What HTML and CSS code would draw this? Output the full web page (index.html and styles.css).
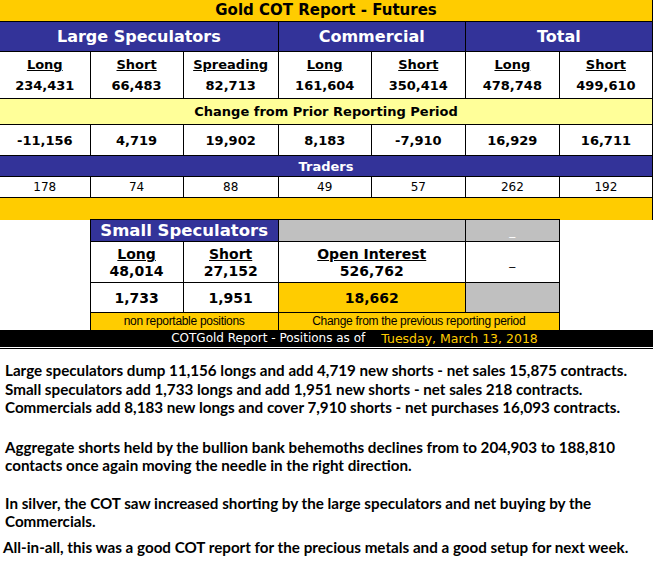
FILE: index.html
```html
<!DOCTYPE html>
<html>
<head>
<meta charset="utf-8">
<link rel="stylesheet" href="styles.css">
</head>
<body>
<div class="report">
<table class="cot">
  <colgroup>
    <col class="c90"><col class="c93"><col class="c95"><col class="c93"><col class="c94"><col class="c94"><col class="c93">
  </colgroup>
  <tr class="r-title"><td colspan="7" class="title first">Gold COT Report - Futures</td></tr>
  <tr class="r-group">
    <td colspan="3" class="group first">Large Speculators</td>
    <td colspan="2" class="group">Commercial</td>
    <td colspan="2" class="group">Total</td>
  </tr>
  <tr class="r-pos">
    <td class="pos first"><u>Long</u><br>234,431</td>
    <td class="pos"><u>Short</u><br>66,483</td>
    <td class="pos"><u>Spreading</u><br>82,713</td>
    <td class="pos"><u>Long</u><br>161,604</td>
    <td class="pos"><u>Short</u><br>350,414</td>
    <td class="pos"><u>Long</u><br>478,748</td>
    <td class="pos"><u>Short</u><br>499,610</td>
  </tr>
  <tr class="r-change"><td colspan="7" class="change first">Change from Prior Reporting Period</td></tr>
  <tr class="r-vals">
    <td class="val first">-11,156</td>
    <td class="val">4,719</td>
    <td class="val">19,902</td>
    <td class="val">8,183</td>
    <td class="val">-7,910</td>
    <td class="val">16,929</td>
    <td class="val">16,711</td>
  </tr>
  <tr class="r-traders"><td colspan="7" class="traders first">Traders</td></tr>
  <tr class="r-tnum">
    <td class="tnum first">178</td>
    <td class="tnum">74</td>
    <td class="tnum">88</td>
    <td class="tnum">49</td>
    <td class="tnum">57</td>
    <td class="tnum">262</td>
    <td class="tnum">192</td>
  </tr>
  <tr class="r-band"><td colspan="7" class="band first"></td></tr>
  <tr class="r-sshead">
    <td class="blank"></td>
    <td colspan="2" class="sshead">Small Speculators</td>
    <td colspan="2" class="grey"></td>
    <td class="grey dash-w">_</td>
    <td class="blank"></td>
  </tr>
  <tr class="r-sspos">
    <td class="blank"></td>
    <td class="sspos"><u>Long</u><br>48,014</td>
    <td class="sspos"><u>Short</u><br>27,152</td>
    <td colspan="2" class="sspos"><u>Open Interest</u><br>526,762</td>
    <td class="sspos dash">_</td>
    <td class="blank"></td>
  </tr>
  <tr class="r-ssval">
    <td class="blank"></td>
    <td class="val ssv">1,733</td>
    <td class="val ssv">1,951</td>
    <td colspan="2" class="val ssv gold">18,662</td>
    <td class="grey"></td>
    <td class="blank"></td>
  </tr>
  <tr class="r-note">
    <td class="blank"></td>
    <td colspan="2" class="note">non reportable positions</td>
    <td colspan="3" class="note">Change from the previous reporting period</td>
    <td class="blank"></td>
  </tr>
  <tr class="r-bar">
    <td colspan="4" class="bar bar-l">COTGold Report - Positions as of</td>
    <td colspan="3" class="bar bar-r">Tuesday, March 13, 2018</td>
  </tr>
</table>
<div class="rule"></div>
</div>

<div class="text">
  <p class="p1">Large speculators dump 11,156 longs and add 4,719 new shorts - net sales 15,875 contracts.<br>
  Small speculators add 1,733 longs and add 1,951 new shorts - net sales 218 contracts.<br>
  Commercials add 8,183 new longs and cover 7,910 shorts - net purchases 16,093 contracts.</p>
  <p class="p2">Aggregate shorts held by the bullion bank behemoths declines from to 204,903 to 188,810<br>
  contacts once again moving the needle in the right direction.</p>
  <p class="p3">In silver, the COT saw increased shorting by the large speculators and net buying by the<br>
  Commercials.</p>
  <p class="p4">All-in-all, this was a good COT report for the precious metals and a good setup for next week.</p>
</div>
</body>
</html>
```

FILE: styles.css
```css
html, body {
  margin: 0;
  padding: 0;
  background: #fff;
}

.report {
  width: 653px;
}

.cot {
  border-collapse: collapse;
  table-layout: fixed;
  width: 653px;
  font-family: "DejaVu Sans", Verdana, sans-serif;
  font-weight: bold;
  color: #000;
}

.c90 { width: 90px; }
.c93 { width: 93px; }
.c94 { width: 94px; }
.c95 { width: 95px; }

.cot td {
  border: 1px solid #000;
  padding: 0;
  text-align: center;
  vertical-align: middle;
}

.cot td.first { border-left: none; }

.cot .r-title td { border-top: none; }

.title {
  background: #ffcc00;
  font-size: 15px;
  height: 21px;
  line-height: 21px;
}

.group {
  background: #333399;
  color: #fff;
  font-size: 16px;
  height: 29px;
}

.pos {
  font-size: 13px;
  line-height: 21px;
  height: 46px;
}

.change {
  background: #ffff99;
  font-size: 13px;
  height: 25px;
}

.val {
  font-size: 13px;
  height: 30px;
}

.val.ssv {
  font-size: 14px;
  height: 29px;
}

.traders {
  background: #333399;
  color: #fff;
  font-size: 13px;
  height: 20px;
}

.tnum {
  font-weight: normal;
  font-size: 12px;
  height: 20px;
}

.cot td.band {
  background: #ffcc00;
  border-bottom: none;
  height: 21px;
}

.cot td.blank {
  border: none;
  background: #fff;
}

.sshead {
  background: #333399;
  color: #fff;
  font-size: 16.5px;
  height: 21px;
}

.grey {
  background: #c0c0c0;
}

.dash-w {
  color: #fff;
  font-size: 12px;
  font-weight: normal;
}

.sspos {
  font-size: 14px;
  line-height: 17px;
  height: 38px;
}

.cot td.sspos {
  padding-top: 2px;
}

.cot td.sspos.dash {
  font-weight: normal;
  font-size: 12px;
  padding-top: 0;
  padding-bottom: 2px;
}

.gold {
  background: #ffcc00;
}

.cot td.note {
  background: #ffcc00;
  font-family: "Liberation Sans", Arial, sans-serif;
  font-weight: normal;
  font-size: 12px;
  letter-spacing: -0.3px;
  height: 17px;
  line-height: 17px;
  border-bottom: none;
}

.cot td.bar {
  background: #000;
  border: none;
  font-family: "DejaVu Sans", Tahoma, sans-serif;
  font-weight: normal;
  font-size: 12px;
  height: 17px;
  line-height: 17px;
}

.cot td.bar-l {
  color: #fff;
  text-align: right;
  padding-right: 6px;
}

.cot td.bar-r {
  color: #ffcc00;
  text-align: left;
  padding-left: 10px;
  font-size: 12.5px;
}

.rule {
  height: 1px;
  margin-top: 1px;
  background: #000;
  width: 653px;
}

.text {
  font-family: Lato, "Open Sans", sans-serif;
  font-weight: bold;
  font-size: 15.2px;
  line-height: 18.5px;
  color: #000;
  padding: 12px 0 0 5px;
}

.text p {
  margin: 0 0 19px 0;
}

.text p.p1 {
  margin-bottom: 21px;
}

.text p.p3 {
  margin-bottom: 7px;
}

.text p.p4 {
  margin-left: -2px;
}
```
